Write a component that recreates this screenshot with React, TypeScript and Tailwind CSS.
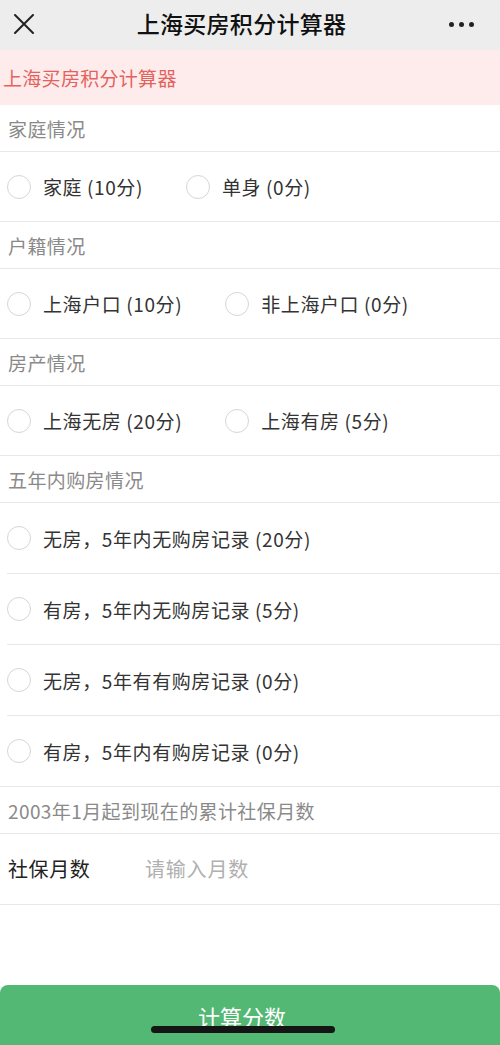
import React from "react";

const font = { fontFamily: '"Noto Sans CJK SC", "Noto Sans", sans-serif' };

function Radio({ label }: { label: string }) {
  return (
    <div className="flex items-center">
      <span className="w-[24px] h-[24px] rounded-full border border-[#d6d6d6] bg-white shrink-0" />
      <span className="ml-[12px] text-[19px] text-[#333] leading-none tracking-[0.6px]">{label}</span>
    </div>
  );
}

function SectionTitle({ text }: { text: string }) {
  return (
    <div className="h-[47px] border-b border-[#e8e8e8] flex items-center pl-[8px] text-[19px] text-[#8a8a8a] leading-none tracking-[0.4px]">
      {text}
    </div>
  );
}

function InlineRow({ options }: { options: string[] }) {
  return (
    <div className="h-[70px] border-b border-[#e8e8e8] flex items-center pl-[7px] gap-[43px]">
      {options.map((o) => (
        <Radio key={o} label={o} />
      ))}
    </div>
  );
}

export default function App() {
  const fiveYear = [
    "无房，5年内无购房记录 (20分)",
    "有房，5年内无购房记录 (5分)",
    "无房，5年有有购房记录 (0分)",
    "有房，5年内有购房记录 (0分)",
  ];
  return (
    <div className="relative w-[500px] h-[1045px] bg-white flex flex-col overflow-hidden" style={font}>
      <div className="h-[50px] bg-[#ededed] flex items-center justify-between px-[14px] shrink-0">
        <svg width="20" height="20" viewBox="0 0 20 20" className="mt-[-2px]">
          <path d="M1 1 L19 19 M19 1 L1 19" stroke="#222" strokeWidth="2" strokeLinecap="round" />
        </svg>
        <div className="text-[23px] font-medium text-[#111] leading-none mt-[-4px] tracking-[0.3px]">上海买房积分计算器</div>
        <div className="flex gap-[5px] items-center mr-[12px] mt-[-2px]">
          <span className="w-[5px] h-[5px] rounded-full bg-[#222]" />
          <span className="w-[5px] h-[5px] rounded-full bg-[#222]" />
          <span className="w-[5px] h-[5px] rounded-full bg-[#222]" />
        </div>
      </div>
      <div className="h-[55px] bg-[#fdeceb] flex items-center pl-[3px] text-[19px] text-[#e4625c] leading-none shrink-0 tracking-[0.3px]">
        上海买房积分计算器
      </div>
      <SectionTitle text="家庭情况" />
      <InlineRow options={["家庭 (10分)", "单身 (0分)"]} />
      <SectionTitle text="户籍情况" />
      <InlineRow options={["上海户口 (10分)", "非上海户口 (0分)"]} />
      <SectionTitle text="房产情况" />
      <InlineRow options={["上海无房 (20分)", "上海有房 (5分)"]} />
      <SectionTitle text="五年内购房情况" />
      {fiveYear.map((o, i) => (
        <div
          key={o}
          className={
            i === fiveYear.length - 1
              ? "h-[71px] border-b border-[#e8e8e8] flex items-center pl-[7px]"
              : "h-[71px] ml-[7px] border-b border-[#e8e8e8] flex items-center"
          }
        >
          <Radio label={o} />
        </div>
      ))}
      <SectionTitle text="2003年1月起到现在的累计社保月数" />
      <div className="h-[71px] border-b border-[#e8e8e8] flex items-center pl-[8px] shrink-0">
        <span className="text-[20px] text-[#222] leading-none w-[137px] tracking-[0.6px]">社保月数</span>
        <span className="text-[20px] text-[#b0b0b0] leading-none tracking-[0.8px]">请输入月数</span>
      </div>
      <div className="flex-1" />
      <div className="h-[60px] bg-[#53b874] rounded-t-[8px] flex items-center justify-center shrink-0 pr-[16px]">
        <span className="text-[22px] text-white leading-none mt-[2px]">计算分数</span>
      </div>
      <div className="absolute left-[151px] top-[1026px] w-[184px] h-[7px] rounded-full bg-[#151515]" />
    </div>
  );
}
